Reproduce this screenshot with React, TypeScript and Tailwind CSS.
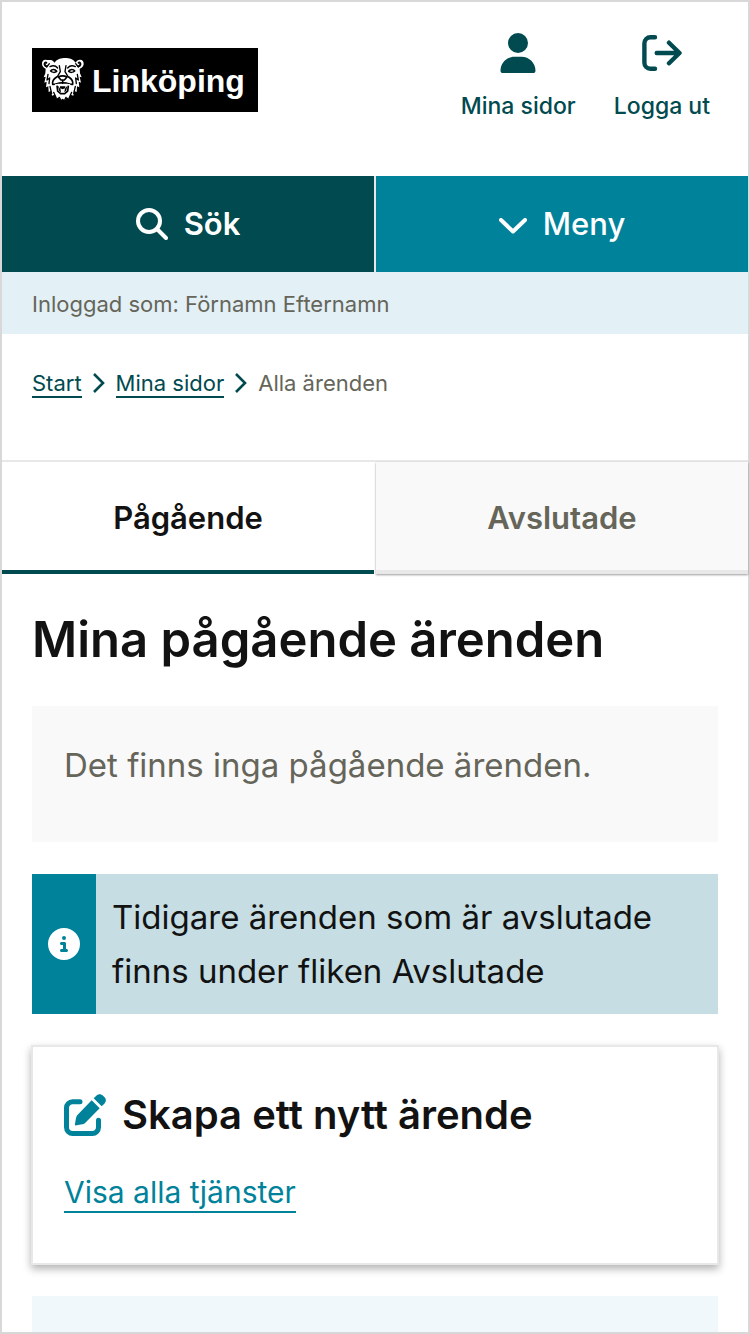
import type { ReactNode } from 'react';
import { FaCircleInfo, FaUser } from 'react-icons/fa6';

function LionMark() {
  return (
    <svg viewBox="0 0 138 144" className="h-12 w-[46px] shrink-0" fill="#fff" aria-hidden="true">
      <path d="M20 9C11 7 5 13 6 22c1 7 5 11 11 13l-1 14-5 12 6-2-4 18 7-3-2 17 7-3 1 17 7-3 3 14 8-3 5 12 7-4 5 9 7-5 7 5 5-9 7 4 5-12 8 3 3-14 7 3 1-17 7 3-2-17 7 3-4-18 6 2-5-12-1-14c7-2 11-6 12-13 1-9-5-15-14-13-5 1-8 4-10 8-4-6-9-10-15-12-8-3-24-3-33 0-6 2-12 6-16 12-2-4-5-7-11-8z" />
      <g fill="none" stroke="#000" strokeLinecap="round" strokeLinejoin="round">
        <path strokeWidth="6" d="M19 17c-4-1-6 2-5 6 1 3 3 5 6 5M116 17c4-1 6 2 5 6-1 3-3 5-6 5" />
        <path strokeWidth="4" d="M28 20l-8 10M107 20l8 10" />
        <path strokeWidth="4" d="M30 29c8-4 17-3 23 4M106 29c-8-4-17-3-23 4" />
        <path strokeWidth="5" d="M32 42c4-6 13-6 18 1-5 4-13 4-18-1zM104 42c-4-6-13-6-18 1 5 4 13 4 18-1z" />
        <path strokeWidth="4" d="M58 26l3 18-9 15M78 26l-3 18 9 15" />
        <path strokeWidth="5" d="M55 60c8-4 18-4 26 0l-8 9h-10zM68 69v10" />
        <path strokeWidth="5" d="M50 60c-9 6-14 13-12 22 9 1 18-6 30-4 12-2 21 5 30 4 2-9-3-16-12-22" />
        <path strokeWidth="4" d="M24 52l-3 17 8-6-2 17M112 52l3 17-8-6 2 17M30 88l5 22M106 88l-5 22M41 106l8 18M95 106l-8 18M58 121l4 8M78 121l-4 8" />
      </g>
      <path d="M45 83l9-3 14 1 14-1 9 3-4 20-8 12H57l-8-12z" />
      <path d="M45 80l12 6 11-5 11 5 12-6-3 12-6 18-7 6H61l-7-6-6-18z" />
      <path d="M51 86l2 16 9 8h12l9-8 2-16" fill="none" stroke="#000" strokeWidth="5" />
      <path d="M54 88h28l-3 12-4 5H61l-4-5z" fill="#000" />
      <path d="M61 94l7 3 7-3-2 12H63zM55 86h5v9zM81 86h-5v9z" />
    </svg>
  );
}

function LogoutIcon() {
  return (
    <svg viewBox="0 0 40 36" className="h-9 w-10" fill="none" stroke="currentColor" strokeWidth="4.4" strokeLinecap="round" strokeLinejoin="round" aria-hidden="true">
      <path d="M13 2.2H8.4a6 6 0 0 0-6 6v19.6a6 6 0 0 0 6 6H13" />
      <path d="M14.700 18H37M27 7.700L37.500 18 27 28.300" />
    </svg>
  );
}

function SearchIcon() {
  return (
    <svg viewBox="0 0 32 32" className="size-8" fill="none" stroke="currentColor" strokeWidth="4" strokeLinecap="round" aria-hidden="true">
      <circle cx="13" cy="13" r="11" />
      <path d="M21 21l9 9" />
    </svg>
  );
}

function ChevronDownIcon() {
  return (
    <svg viewBox="0 0 28 16" className="mt-1 h-4 w-7" fill="none" stroke="currentColor" strokeWidth="4" strokeLinecap="round" strokeLinejoin="round" aria-hidden="true">
      <path d="M2 2l12 11.500L26 2" />
    </svg>
  );
}

function CrumbChevron() {
  return (
    <svg viewBox="0 0 12 20" className="h-5 w-3 text-[#004a50]" fill="none" stroke="currentColor" strokeWidth="2.6" aria-hidden="true">
      <path d="M1 1l9 9-9 9" />
    </svg>
  );
}

function EditIcon() {
  return (
    <svg viewBox="0 0 126 126" className="size-[42px] shrink-0 text-[#00829b]" fill="currentColor" aria-hidden="true">
      <path d="M48 23H26A18.500 18.500 0 0 0 7.500 41.500V100A18.500 18.500 0 0 0 26 118.500H85A18.500 18.500 0 0 0 103.500 100V79" fill="none" stroke="currentColor" strokeWidth="15" strokeLinecap="round" />
      <path d="M83 19l24 24-43 43c-3 3-6 4-9 5l-17 3c-4 1-6-1-5-5l3-17c1-3 2-7 5-10z" />
      <path d="M89 13l8-8c6-6 14-6 20 0l4 4c6 6 6 14 0 20l-8 8z" />
    </svg>
  );
}

function TopLink({ label, children }: { label: string; children: ReactNode }) {
  return (
    <a href="#" className="flex flex-col items-center gap-4 text-[23px] leading-[34px] font-medium text-[#004a50]">
      <span className="flex h-10 items-center">{children}</span>
      {label}
    </a>
  );
}

export default function App() {
  return (
    <div className="flex min-h-screen flex-col border-2 border-[#d8d8d8] bg-white font-['Inter','Liberation_Sans',sans-serif] text-[#121212]">
      <header>
        <div className="flex items-start justify-between pt-[31px] pr-[38px] pb-[53px] pl-[30px]">
          <a href="#" aria-label="Linköping" className="mt-[15px] flex h-16 w-[226px] items-center gap-1.5 bg-black pt-0.5 pl-2 font-['Liberation_Sans',sans-serif] text-[32px] font-bold text-white">
            <LionMark />
            Linköping
          </a>
          <nav aria-label="Konto" className="flex gap-[38px]">
            <TopLink label="Mina sidor">
              <FaUser className="size-10" />
            </TopLink>
            <TopLink label="Logga ut">
              <LogoutIcon />
            </TopLink>
          </nav>
        </div>
        <div className="grid grid-cols-2 gap-0.5 bg-[#e8e8e8] text-[31px] leading-10 font-medium text-white">
          <button type="button" className="flex h-24 items-center justify-center gap-4 bg-[#004a50] font-semibold">
            <SearchIcon />
            Sök
          </button>
          <button type="button" className="flex h-24 items-center justify-center gap-4 bg-[#00829b]">
            <ChevronDownIcon />
            Meny
          </button>
        </div>
        <p className="bg-[#e3f0f5] px-[30px] pt-4 pb-3.5 text-[22px] leading-8 text-[#65655a]">Inloggad som: Förnamn Efternamn</p>
      </header>

      <nav aria-label="Brödsmulor" className="flex items-center gap-[11px] px-[30px] pt-[33px] pb-[61px] text-[22px] leading-8 text-[#65655a]">
        <a href="#" className="border-b-2 border-[#004a50] pt-0.5 leading-[26px] text-[#004a50]">Start</a>
        <CrumbChevron />
        <a href="#" className="border-b-2 border-[#004a50] pt-0.5 leading-[26px] text-[#004a50]">Mina sidor</a>
        <CrumbChevron />
        <span>Alla ärenden</span>
      </nav>

      <div role="tablist" className="grid grid-cols-2 gap-0.5 border-t-2 border-[#e8e8e8] text-[31px] leading-10 font-semibold">
        <button type="button" role="tab" aria-selected="true" className="h-28 border-b-4 border-[#004a50] pt-1">Pågående</button>
        <button type="button" role="tab" aria-selected="false" className="h-28 border-b-4 border-[#e8e8e8] bg-[#f9f9f9] pt-1 text-[#65655a] shadow-[0_1px_2px_rgba(0,0,0,0.4)]">Avslutade</button>
      </div>

      <main className="flex grow flex-col gap-8 px-[30px] pt-8">
        <h1 className="text-[49px] leading-[68px] font-semibold">Mina pågående ärenden</h1>
        <p className="bg-[#f9f9f9] px-8 pt-8 pb-[50px] text-[33px] leading-[54px] text-[#65655a]">Det finns inga pågående ärenden.</p>
        <div role="note" className="flex bg-[#c5dde3]">
          <span className="flex w-16 shrink-0 items-center justify-center bg-[#00829b] text-white">
            <FaCircleInfo className="size-8" />
          </span>
          <p className="max-w-[592px] p-4 text-[33px] leading-[54px]">Tidigare ärenden som är avslutade finns under fliken Avslutade</p>
        </div>
        <section className="-mx-px -my-px border-2 border-[#e8e8e8] px-[31px] pt-10 pb-[50px] shadow-[0_4px_8px_rgba(0,0,0,0.3)]">
          <h2 className="flex items-center gap-4 text-[40px] leading-[56px] font-semibold">
            <EditIcon />
            Skapa ett nytt ärende
          </h2>
          <p className="mt-[30px] flex">
            <a href="#" className="border-b-2 border-[#00829b] text-[30px] leading-[38px] text-[#00829b]">Visa alla tjänster</a>
          </p>
        </section>
        <section className="min-h-9 grow bg-[#f0f8fb]" />
      </main>
    </div>
  );
}
